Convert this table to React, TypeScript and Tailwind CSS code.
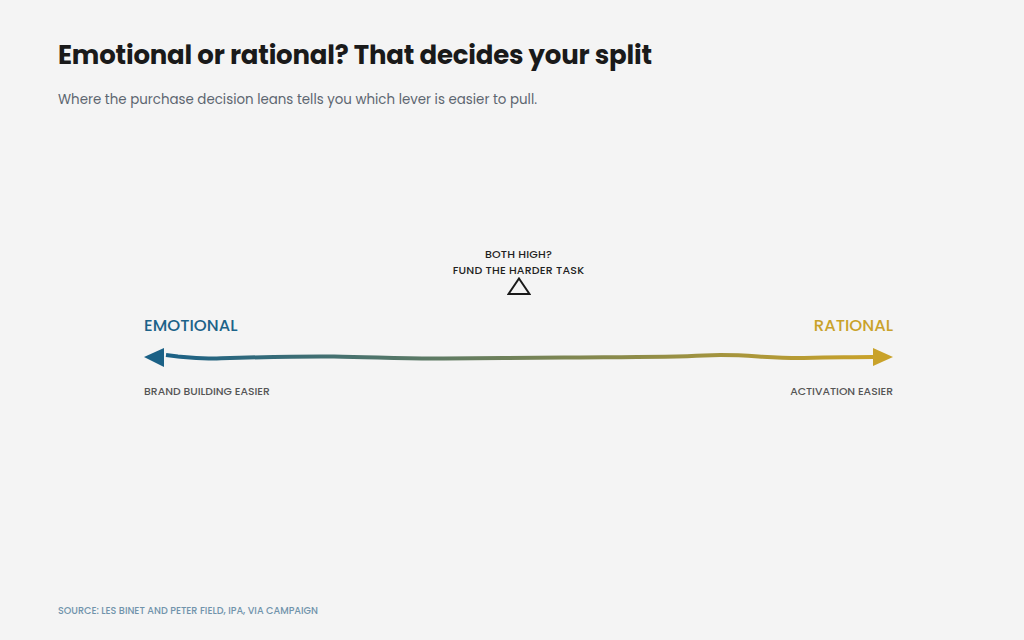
const font = { fontFamily: "Poppins, Inter, 'Noto Sans', sans-serif" };

function Axis() {
  return (
    <svg viewBox="0 0 749 24" className="block h-[24px] w-[749px]">
      <defs>
        <linearGradient id="axisGrad" x1="0" y1="0" x2="1" y2="0">
          <stop offset="0%" stopColor="#1b6186" />
          <stop offset="100%" stopColor="#c9a22a" />
        </linearGradient>
      </defs>
      <polygon points="0,12 20,3 20,22" fill="#1b6186" />
      <path
        d="M22 10 L 34 11.5 C 44 12.5, 52 14, 70 13.5 S 150 11, 190 11.5 S 260 14, 300 13.5 S 380 13, 420 12.5 S 520 12.5, 560 10.5 S 620 13.5, 660 13 S 710 12, 729 12"
        fill="none"
        stroke="url(#axisGrad)"
        strokeWidth="4"
        strokeLinecap="butt"
      />
      <polygon points="729,3 749,12 729,21" fill="#c9a22a" />
    </svg>
  );
}

export default function App() {
  return (
    <div
      className="flex h-[640px] w-full flex-col bg-[#f4f4f4] px-[58px] pt-[38px] pb-[22px]"
      style={font}
    >
      <h1 className="text-[26px] leading-[34px] font-bold tracking-[-0.2px] text-[#1a1a1a]">
        Emotional or rational? That decides your split
      </h1>
      <p className="mt-[18px] text-[13.4px] leading-[20px] text-[#5d6670]">
        Where the purchase decision leans tells you which lever is easier to pull.
      </p>

      <div className="mt-[136px] ml-[86px] w-[749px]">
        <div className="flex flex-col items-center">
          <div className="text-center text-[11px] leading-[16px] font-medium tracking-[0.2px] text-[#1f1f1f]">
            <div>BOTH HIGH?</div>
            <div>FUND THE HARDER TASK</div>
          </div>
          <svg viewBox="0 0 24 18" className="-mt-[1px] h-[18px] w-[24px]">
            <polygon
              points="12,1.5 22.5,17 1.5,17"
              fill="none"
              stroke="#1a1a1a"
              strokeWidth="2"
              strokeLinejoin="miter"
            />
          </svg>
        </div>

        <div className="mt-[19px] flex justify-between text-[16.5px] leading-[24px] font-medium">
          <span className="text-[#1d6389]">EMOTIONAL</span>
          <span className="text-[#c9a22a]">RATIONAL</span>
        </div>

        <div className="mt-[7px]">
          <Axis />
        </div>

        <div className="mt-[15px] flex justify-between text-[10.8px] leading-[16px] font-medium text-[#555555]">
          <span>BRAND BUILDING EASIER</span>
          <span>ACTIVATION EASIER</span>
        </div>
      </div>

      <div className="mt-auto text-[9.6px] leading-[14px] font-medium text-[#7093ab]">
        SOURCE: LES BINET AND PETER FIELD, IPA, VIA CAMPAIGN
      </div>
    </div>
  );
}
